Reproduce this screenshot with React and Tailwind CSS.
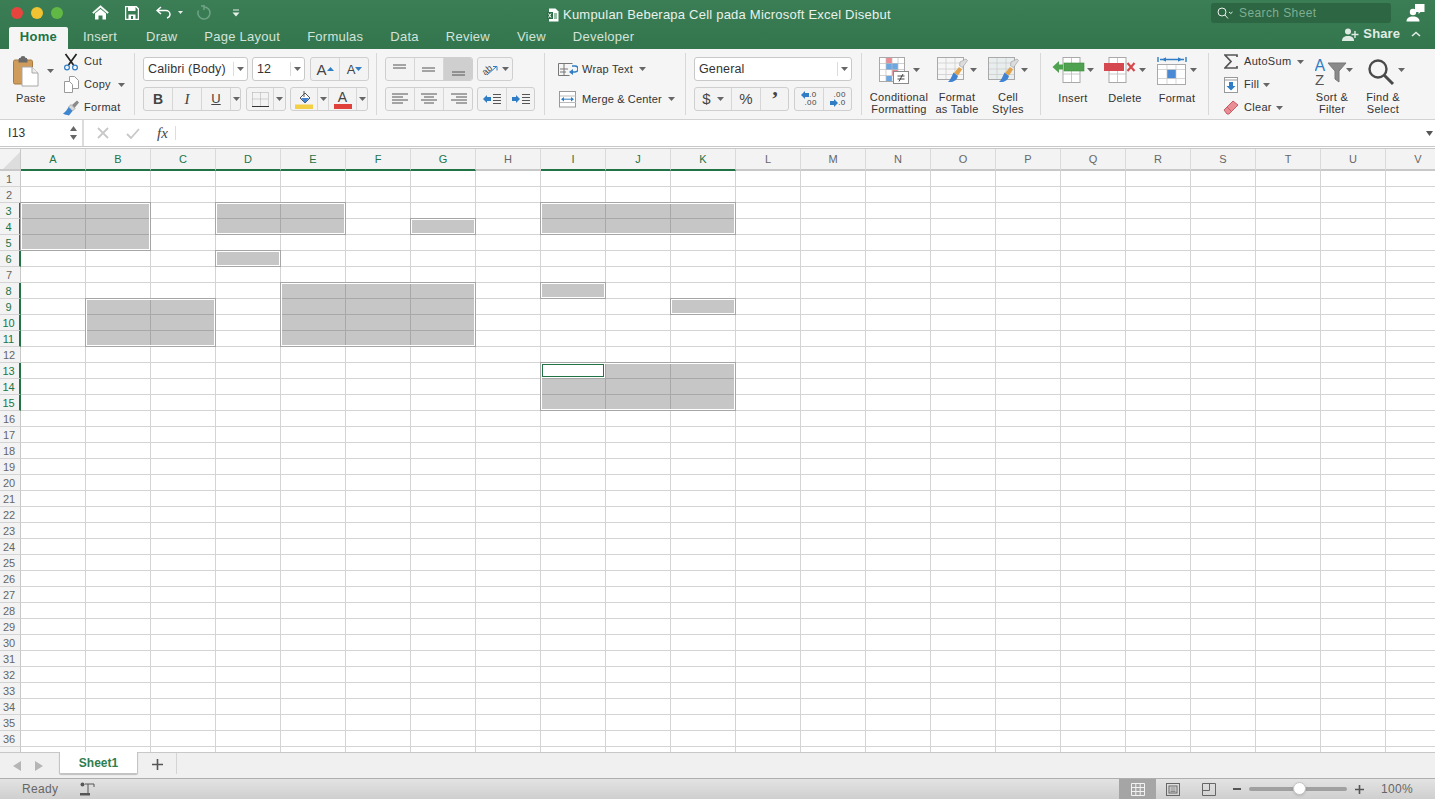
import React from "react";

const FONT = "font-['Liberation_Sans',Arial,sans-serif]";
const COLS = "ABCDEFGHIJKLMNOPQRSTUV".split("");
const SEL_COLS = "ABCDEFGIJK";
const SEL_ROWS = [3, 4, 5, 6, 8, 9, 10, 11, 13, 14, 15];
const SELECTIONS = [
  { c: 0, r: 3, w: 2, h: 3 },
  { c: 3, r: 3, w: 2, h: 2 },
  { c: 6, r: 4, w: 1, h: 1 },
  { c: 3, r: 6, w: 1, h: 1 },
  { c: 8, r: 3, w: 3, h: 2 },
  { c: 4, r: 8, w: 3, h: 4 },
  { c: 8, r: 8, w: 1, h: 1 },
  { c: 10, r: 9, w: 1, h: 1 },
  { c: 1, r: 9, w: 2, h: 3 },
  { c: 8, r: 13, w: 3, h: 3, active: true },
];

function Caret({ className = "" }) {
  return (
    <svg width="7" height="4" viewBox="0 0 7 4" className={"shrink-0 " + className}>
      <path d="M0 0h7L3.5 4z" fill="#666" />
    </svg>
  );
}

function Combo({ w, label, className = "" }) {
  return (
    <div className={"h-[24px] rounded-[3px] border border-[#c9c9c9] bg-white flex items-center text-[12.5px] tracking-[0.15px] text-[#333] " + w + " " + className}>
      <span className="pl-[4px] flex-1 whitespace-nowrap">{label}</span>
      <span className="w-[14px] h-[14px] border-l border-[#dcdcdc] flex items-center justify-center shrink-0">
        <Caret />
      </span>
    </div>
  );
}

function Seg({ children, className = "" }) {
  return (
    <div className={"h-[24px] rounded-[3px] border border-[#cfcfcf] bg-[#f3f3f3] flex overflow-hidden " + className}>
      {children}
    </div>
  );
}

function Cell({ w, children, active, last }) {
  return (
    <div className={"h-full flex items-center justify-center shrink-0 " + w + " " + (last ? "" : "border-r border-[#d6d6d6] ") + (active ? "bg-[#cfcfcf]" : "")}>
      {children}
    </div>
  );
}

function Lines({ rows }) {
  return (
    <svg width="18" height="14" viewBox="0 0 18 14">
      {rows.map(([x1, x2, y], i) => (
        <path key={i} d={`M${x1} ${y}H${x2}`} stroke="#555" strokeWidth="1" />
      ))}
    </svg>
  );
}

function TallButton({ w, icon, label, label2, className = "" }) {
  return (
    <div className={"shrink-0 flex flex-col items-center " + w + " " + className}>
      <div className="h-[38px] flex items-center justify-center relative w-full">{icon}</div>
      <div className="text-[11px] leading-[12px] tracking-[0.3px] text-[#333] text-center whitespace-nowrap mt-[1px]">
        {label}
        {label2 && <br />}
        {label2}
      </div>
    </div>
  );
}

function SmallRow({ icon, label, caretClass, iconW = "w-[22px]", h = "h-[23px]" }) {
  return (
    <div className={"flex items-center " + h}>
      <span className={"flex justify-center shrink-0 " + iconW}>{icon}</span>
      <span className="text-[11px] tracking-[0.3px] text-[#333] whitespace-nowrap ml-[2px]">{label}</span>
      {caretClass && <Caret className={caretClass} />}
    </div>
  );
}

const PasteIcon = (
  <svg width="26" height="31" viewBox="0 0 26 31">
    <rect x="0.5" y="4" width="19" height="24" rx="1.5" fill="#cf9c5c" stroke="#a87a3e" />
    <path d="M6 4h8V2h-1.5a2.5 2 0 0 0-5 0H6z" fill="#6a6a6a" />
    <rect x="5.5" y="3" width="9" height="3.5" rx="0.6" fill="#6a6a6a" />
    <path d="M9 11h10l6 6v13H9z" fill="#fff" stroke="#a8a8a8" />
    <path d="M19 11v6h6" fill="#eee" stroke="#a8a8a8" />
  </svg>
);
const CutIcon = (
  <svg width="16" height="18" viewBox="0 0 16 18">
    <path d="M2.5 1l8 11M13.5 1l-8 11" stroke="#222" strokeWidth="1.7" />
    <circle cx="4" cy="14.5" r="2.4" fill="none" stroke="#2f7dc4" strokeWidth="1.2" />
    <circle cx="12" cy="14.5" r="2.4" fill="none" stroke="#2f7dc4" strokeWidth="1.2" />
  </svg>
);
const CopyIcon = (
  <svg width="15" height="17" viewBox="0 0 15 17">
    <path d="M5.5 0.5h5l4 4v8h-9z" fill="#fff" stroke="#9a9a9a" />
    <path d="M0.5 5.5h5l3 3v8h-8z" fill="#fff" stroke="#9a9a9a" />
  </svg>
);
const BrushIcon = (
  <svg width="17" height="16" viewBox="0 0 17 16">
    <path d="M9 5l5-4.5 2 2L11.5 8z" fill="#8a8a8a" />
    <path d="M8 4.5l4 4-2.5 2.5-4-4z" fill="#d9d9d9" stroke="#888" strokeWidth="0.6" />
    <path d="M5.5 7l4 4-3.5 4.5C3.5 15 1.5 14.5 0 13.5 2.5 12 4 10 5.5 7z" fill="#3e86cf" />
  </svg>
);
const GridSvg = ({ children, w = 32, h = 30 }) => (
  <svg width={w} height={h} viewBox={`0 0 ${w} ${h}`}>{children}</svg>
);
const CondIcon = (
  <GridSvg>
    <rect x="0.5" y="0.5" width="25" height="24" fill="#fff" stroke="#a9a9a9" />
    <rect x="7" y="1" width="6" height="5" fill="#ec8b94" />
    <rect x="7" y="6" width="12" height="7" fill="#6da7e3" />
    <rect x="13" y="13" width="6" height="6" fill="#ec8b94" />
    <rect x="7" y="19" width="6" height="5" fill="#6da7e3" />
    <path d="M7 1v23M13 1v23M19 1v23M1 6.500h24M1 12.500h24M1 18.500h24" stroke="#bdbdbd" strokeWidth="0.7" />
    <rect x="14.500" y="14.500" width="15" height="12" fill="#fff" stroke="#8a8a8a" />
    <path d="M18.500 19h7M18.500 22h7M24 17l-4 7.500" stroke="#333" strokeWidth="0.9" fill="none" />
  </GridSvg>
);
const TableBrush = ({ tint }) => (
  <GridSvg>
    <rect x="0.5" y="0.5" width="26" height="22" fill={tint} stroke="#a9a9a9" />
    <path d="M9 1v21M18 1v21M1 6h25M1 12h25M1 17.500h25" stroke="#c8c8c8" strokeWidth="0.7" />
    <path d="M23 5l6-3 1.500 1.500-5 7-3-2z" fill="#dcdcdc" stroke="#999" strokeWidth="0.6" />
    <path d="M17 16l5-6 3 2.500-4 6z" fill="#e0a24a" />
    <path d="M16.500 15.500l4.500 3.500c-1 4-4 6.500-10 6 2.500-2 3.500-5.500 5.500-9.500z" fill="#3f82d2" />
  </GridSvg>
);
const InsertIcon = (
  <GridSvg w={34}>
    <rect x="11" y="0.500" width="17" height="25" fill="#fff" stroke="#a9a9a9" />
    <path d="M19.500 1v24M11 17h17" stroke="#bbb" strokeWidth="0.8" />
    <rect x="12" y="6" width="20" height="8" fill="#4fa24f" stroke="#3c8a3c" strokeWidth="0.6" />
    <path d="M0.500 10L7 4v3.500h4v5H7V16z" fill="#4fa24f" />
  </GridSvg>
);
const DeleteIcon = (
  <GridSvg w={34}>
    <rect x="5" y="0.500" width="17" height="25" fill="#fff" stroke="#a9a9a9" />
    <path d="M13.500 1v24M5 17h17" stroke="#bbb" strokeWidth="0.8" />
    <rect x="0" y="6" width="20" height="8" fill="#d6484f" />
    <path d="M23.500 6l7 8M30.500 6l-7 8" stroke="#d6484f" strokeWidth="2.200" />
  </GridSvg>
);
const FormatIcon = (
  <GridSvg>
    <path d="M1 0v5M29 0v5M3 2.500h24" stroke="#2f7dc4" strokeWidth="1.400" />
    <path d="M5 2.500l4-2.300v4.600zM25 2.500l-4-2.300v4.600z" fill="#2f7dc4" />
    <rect x="0.500" y="7.500" width="28" height="20" fill="#fff" stroke="#a9a9a9" />
    <rect x="10" y="12.500" width="9" height="9" fill="#4a8ad4" />
    <path d="M10 8v19M19 8v19M1 12.500h27M1 21.500h27" stroke="#c4c4c4" strokeWidth="0.7" />
  </GridSvg>
);

function Ribbon() {
  return (
    <div className="h-[71px] shrink-0 bg-[#f5f5f5] border-b border-[#d2d2d2] flex pt-[4px]">
      {/* Clipboard */}
      <div className="w-[135px] h-[62px] border-r border-[#d8d8d8] flex shrink-0">
        <div className="w-[60px] pl-[13px] shrink-0">
          <div className="flex items-center h-[36px]">
            {PasteIcon}
            <Caret className="ml-[8px]" />
          </div>
          <div className="text-[11px] tracking-[0.3px] text-[#333] mt-[3px] ml-[3px] leading-[12px]">Paste</div>
        </div>
        <div className="-mt-[3px]">
          <SmallRow icon={CutIcon} label="Cut" />
          <SmallRow icon={CopyIcon} label="Copy" caretClass="ml-[7px]" />
          <SmallRow icon={BrushIcon} label="Format" />
        </div>
      </div>
      {/* Font */}
      <div className="w-[242px] h-[62px] border-r border-[#d8d8d8] shrink-0 pl-[8px] pt-[4px]">
        <div className="flex gap-[4px]">
          <Combo w="w-[105px]" label="Calibri (Body)" />
          <Combo w="w-[53px]" label="12" />
          <Seg className="w-[59px] ml-[1px]">
            <Cell w="w-[29px]">
              <span className="text-[15px] text-[#444] font-medium leading-none">A</span>
              <svg width="7" height="4" viewBox="0 0 7 4"><path d="M0 4h7L3.500 0z" fill="#2f7dc4" /></svg>
            </Cell>
            <Cell w="w-[29px]" last>
              <span className="text-[13px] text-[#444] leading-none">A</span>
              <svg width="7" height="4" viewBox="0 0 7 4"><path d="M0 0h7L3.500 4z" fill="#2f7dc4" /></svg>
            </Cell>
          </Seg>
        </div>
        <div className="flex mt-[6px]">
          <Seg className="w-[98px]">
            <Cell w="w-[29px]"><span className="text-[14px] font-bold text-[#444]">B</span></Cell>
            <Cell w="w-[29px]"><span className="text-[15px] italic font-['Liberation_Serif',serif] text-[#444]">I</span></Cell>
            <Cell w="w-[29px]"><span className="text-[13px] underline text-[#444]">U</span></Cell>
            <Cell w="w-[10px]" last><Caret /></Cell>
          </Seg>
          <Seg className="w-[40px] ml-[5px]">
            <Cell w="w-[27px]">
              <svg width="17" height="15" viewBox="0 0 17 15">
                <path d="M0.500 0.500h16v13M0.500 0.500v13M8.500 0.500v13M0.500 7h16" stroke="#aaa" strokeDasharray="1 1" fill="none" />
                <path d="M0 14.500h17" stroke="#333" />
              </svg>
            </Cell>
            <Cell w="w-[11px]" last><Caret /></Cell>
          </Seg>
          <Seg className="w-[78px] ml-[4px]">
            <Cell w="w-[27px]">
              <svg width="18" height="19" viewBox="0 0 18 19">
                <path d="M5 8l5-5 5 5-5 5z" fill="#fff" stroke="#555" />
                <path d="M6 8h8l-4 5z" fill="#3f82d2" />
                <path d="M9 1v6" stroke="#555" />
                <rect x="0" y="14.500" width="18" height="4.500" fill="#f3cf46" />
              </svg>
            </Cell>
            <Cell w="w-[11px]"><Caret /></Cell>
            <Cell w="w-[28px]">
              <div className="flex flex-col items-center">
                <span className="text-[14px] leading-[14px] text-[#444] font-medium">A</span>
                <span className="block w-[18px] h-[5px] bg-[#e0413a]" />
              </div>
            </Cell>
            <Cell w="w-[10px]" last><Caret /></Cell>
          </Seg>
        </div>
      </div>
      {/* Alignment */}
      <div className="w-[168px] h-[62px] border-r border-[#d8d8d8] shrink-0 pl-[8px] pt-[4px]">
        <div className="flex">
          <Seg className="w-[88px]">
            <Cell w="w-[29px]"><Lines rows={[[2, 15, 3], [2, 15, 6]]} /></Cell>
            <Cell w="w-[29px]"><Lines rows={[[2, 15, 6], [2, 15, 9]]} /></Cell>
            <Cell w="w-[29px]" active last><Lines rows={[[2, 15, 10], [2, 15, 13]]} /></Cell>
          </Seg>
          <Seg className="w-[36px] ml-[4px]">
            <Cell w="w-[34px]" last>
              <svg width="18" height="14" viewBox="0 0 18 14">
                <text x="1" y="11" fontSize="9" fill="#444" transform="rotate(-40 6 8)" fontFamily="Liberation Sans">ab</text>
                <path d="M6 13L15 5M12 4.500h4v4" stroke="#2f7dc4" fill="none" />
              </svg>
              <Caret className="ml-[3px]" />
            </Cell>
          </Seg>
        </div>
        <div className="flex mt-[6px]">
          <Seg className="w-[88px]">
            <Cell w="w-[29px]"><Lines rows={[[1, 17, 2], [1, 12, 5], [1, 17, 8], [1, 12, 11]]} /></Cell>
            <Cell w="w-[29px]"><Lines rows={[[1, 17, 2], [4, 14, 5], [1, 17, 8], [4, 14, 11]]} /></Cell>
            <Cell w="w-[29px]" last><Lines rows={[[1, 17, 2], [6, 17, 5], [1, 17, 8], [6, 17, 11]]} /></Cell>
          </Seg>
          <Seg className="w-[58px] ml-[4px]">
            <Cell w="w-[29px]">
              <svg width="18" height="12" viewBox="0 0 18 12">
                <path d="M0 6l4-4v2h4v4H4v2z" fill="#2f7dc4" />
                <path d="M10 1.500h8M10 4.500h8M10 7.500h8M10 10.500h8" stroke="#555" />
              </svg>
            </Cell>
            <Cell w="w-[27px]" last>
              <svg width="18" height="12" viewBox="0 0 18 12">
                <path d="M8 6L4 2v2H0v4h4v2z" fill="#2f7dc4" />
                <path d="M10 1.500h8M10 4.500h8M10 7.500h8M10 10.500h8" stroke="#555" />
              </svg>
            </Cell>
          </Seg>
        </div>
      </div>
      {/* Wrap / Merge */}
      <div className="w-[141px] h-[62px] border-r border-[#d8d8d8] shrink-0 pl-[13px]">
        <div className="flex items-center h-[24px] mt-[4px]">
          <svg width="20" height="13" viewBox="0 0 20 13" className="shrink-0">
            <path d="M0.500 0.500h14M0.500 0.500v12h11M6 0.500v12M2 6h8M2 9h6" stroke="#777" fill="none" />
            <path d="M14 3h3a3 3 0 0 1 0 6h-3" stroke="#2f7dc4" strokeWidth="1.500" fill="none" />
            <path d="M11 9l4-3v6z" fill="#2f7dc4" />
          </svg>
          <span className="text-[11px] tracking-[0.2px] text-[#333] ml-[4px] whitespace-nowrap">Wrap Text</span>
          <Caret className="ml-[6px]" />
        </div>
        <div className="flex items-center h-[24px] mt-[6px]">
          <svg width="18" height="17" viewBox="0 0 18 17" className="shrink-0 ml-[1px]">
            <rect x="0.500" y="0.500" width="16" height="15.500" fill="#fff" stroke="#999" />
            <path d="M1 5h16M1 11.500h16" stroke="#bbb" />
            <path d="M3 8.200h11" stroke="#2f7dc4" />
            <path d="M2 8.200l3-2.200v4.400zM15 8.200l-3-2.200v4.400z" fill="#2f7dc4" />
          </svg>
          <span className="text-[11px] tracking-[0.15px] text-[#333] ml-[5px] whitespace-nowrap">Merge &amp; Center</span>
          <Caret className="ml-[6px]" />
        </div>
      </div>
      {/* Number */}
      <div className="w-[176px] h-[62px] border-r border-[#d8d8d8] shrink-0 pl-[8px] pt-[4px]">
        <Combo w="w-[158px]" label="General" />
        <div className="flex mt-[6px]">
          <Seg className="w-[95px]">
            <Cell w="w-[37px]">
              <span className="text-[15px] text-[#444]">$</span>
              <Caret className="ml-[6px]" />
            </Cell>
            <Cell w="w-[29px]"><span className="text-[15px] text-[#444]">%</span></Cell>
            <Cell w="w-[28px]" last><span className="text-[22px] leading-[14px] font-bold text-[#444] font-['Liberation_Serif',serif]">’</span></Cell>
          </Seg>
          <Seg className="w-[58px] ml-[5px]">
            <Cell w="w-[29px]">
              <div className="text-[8px] leading-[8px] text-[#444] text-right tracking-[0.4px]">
                <div className="flex items-center justify-end"><svg width="8" height="8" viewBox="0 0 8 8"><path d="M0 4l4-4v2h4v4H4v2z" fill="#2f7dc4" /></svg>.0</div>
                <div>.00</div>
              </div>
            </Cell>
            <Cell w="w-[28px]" last>
              <div className="text-[8px] leading-[8px] text-[#444] text-right tracking-[0.4px]">
                <div>.00</div>
                <div className="flex items-center justify-end"><svg width="8" height="8" viewBox="0 0 8 8"><path d="M8 4L4 0v2H0v4h4v2z" fill="#2f7dc4" /></svg>.0</div>
              </div>
            </Cell>
          </Seg>
        </div>
      </div>
      {/* Styles */}
      <div className="w-[179px] h-[62px] border-r border-[#d8d8d8] shrink-0 flex pl-[7px]">
        <TallButton w="w-[60px]" label="Conditional" label2="Formatting" icon={<div className="flex items-center">{CondIcon}<Caret className="ml-[2px] -mt-[4px]" /></div>} />
        <TallButton w="w-[56px]" label="Format" label2="as Table" icon={<div className="flex items-center"><TableBrush tint="#f6f6f6" /><Caret className="ml-[1px] -mt-[4px]" /></div>} />
        <TallButton w="w-[46px]" label="Cell" label2="Styles" icon={<div className="flex items-center"><TableBrush tint="#e8eeee" /><Caret className="ml-[1px] -mt-[4px]" /></div>} />
      </div>
      {/* Cells */}
      <div className="w-[168px] h-[62px] border-r border-[#d8d8d8] shrink-0 flex pl-[6px]">
        <TallButton w="w-[52px]" label="Insert" icon={<div className="flex items-center">{InsertIcon}<Caret className="ml-[1px] -mt-[4px]" /></div>} />
        <TallButton w="w-[52px]" label="Delete" icon={<div className="flex items-center">{DeleteIcon}<Caret className="ml-[1px] -mt-[4px]" /></div>} />
        <TallButton w="w-[52px]" label="Format" icon={<div className="flex items-center">{FormatIcon}<Caret className="ml-[1px] -mt-[4px]" /></div>} />
      </div>
      {/* Editing */}
      <div className="h-[62px] flex pl-[11px] shrink-0">
        <div className="w-[87px] -mt-[3px] shrink-0">
          <SmallRow
            icon={<svg width="14" height="15" viewBox="0 0 14 15"><path d="M13 3V1H1l6 6.500L1 14h12v-2" stroke="#555" strokeWidth="1.700" fill="none" /></svg>}
            label="AutoSum" caretClass="ml-[6px]"
          />
          <SmallRow
            icon={<svg width="14" height="16" viewBox="0 0 14 16"><rect x="0.500" y="0.500" width="13" height="15" fill="#fff" stroke="#999" /><path d="M0.500 3h13" stroke="#999" /><path d="M5 5h4v4h2.500L7 13.500 2.500 9H5z" fill="#2f7dc4" /></svg>}
            label="Fill" caretClass="ml-[4px]"
          />
          <SmallRow
            icon={<svg width="16" height="15" viewBox="0 0 16 15"><path d="M1 10l9-9 5 4-9 9H4z" fill="#ea8e95" stroke="#c65c65" /><path d="M4 7l4 4" stroke="#c65c65" /></svg>}
            label="Clear" caretClass="ml-[4px]"
          />
        </div>
        <TallButton w="w-[50px]" label="Sort &" label2="Filter" icon={
          <div className="flex items-center ml-[3px]">
            <svg width="32" height="28" viewBox="0 0 32 28">
              <text x="-0.500" y="13" fontSize="16" fill="#2f7dc4" fontFamily="Liberation Sans">A</text>
              <text x="0" y="27" fontSize="15" fill="#555" fontFamily="Liberation Sans">Z</text>
              <path d="M13 5h18l-7 8v11l-4-3v-8z" fill="#8a8a8a" stroke="#777" />
            </svg>
            <Caret className="-ml-[1px] -mt-[4px]" />
          </div>
        } />
        <TallButton w="w-[52px]" label="Find &" label2="Select" icon={
          <div className="flex items-center ml-[6px]">
            <svg width="28" height="28" viewBox="0 0 28 28">
              <circle cx="11" cy="11" r="8.500" fill="none" stroke="#4a4a4a" strokeWidth="2.400" />
              <path d="M17 17l9 9" stroke="#4a4a4a" strokeWidth="3" />
            </svg>
            <Caret className="ml-[3px] -mt-[4px]" />
          </div>
        } />
      </div>
    </div>
  );
}

function TitleBar() {
  const tabs = ["Insert", "Draw", "Page Layout", "Formulas", "Data", "Review", "View", "Developer"];
  return (
    <div className="h-[49px] shrink-0 bg-linear-to-b from-[#3b7e55] to-[#33764e] relative">
      <div className="h-[27px] flex items-center pb-[2px]">
        <div className="flex gap-[8px] pl-[11px]">
          <span className="w-[12px] h-[12px] rounded-full bg-[#e8443e]" />
          <span className="w-[12px] h-[12px] rounded-full bg-[#f1c232]" />
          <span className="w-[12px] h-[12px] rounded-full bg-[#62b844]" />
        </div>
        <svg width="17" height="15" viewBox="0 0 17 15" className="ml-[29px]">
          <path d="M8.500 0.500L0.500 7.500l1 1 7-6 7 6 1-1z" fill="#fff" stroke="#fff" strokeWidth="0.500" />
          <path d="M3 8.500v6h3.500v-4h4v4H14v-6L8.500 4z" fill="#fff" />
        </svg>
        <svg width="14" height="14" viewBox="0 0 14 14" className="ml-[16px]">
          <path d="M0.500 0.500h10.500l2.500 2.500v10.500h-13z" fill="none" stroke="#fff" strokeWidth="1.500" />
          <rect x="3" y="1" width="7.500" height="4" fill="#fff" />
          <rect x="3.500" y="8.500" width="7" height="5" fill="#fff" />
          <rect x="6" y="10" width="2" height="3" fill="#35784f" />
        </svg>
        <svg width="16" height="13" viewBox="0 0 16 13" className="ml-[17px]">
          <path d="M5 1L1 4.500 5 8M1.500 4.500H10a4 4 0 0 1 4 4 4 4 0 0 1-3 3.500" fill="none" stroke="#fff" strokeWidth="1.500" />
        </svg>
        <svg width="5" height="3" viewBox="0 0 5 3" className="ml-[6px]"><path d="M0 0h5L2.500 3z" fill="#e5efe9" /></svg>
        <svg width="14" height="15" viewBox="0 0 14 15" className="ml-[14px]">
          <path d="M7 2a6 6 0 1 1-5.500 3.500M7 0v5M7 1h-3" fill="none" stroke="#6fa386" strokeWidth="1.500" />
        </svg>
        <svg width="8" height="8" viewBox="0 0 8 8" className="ml-[21px]">
          <path d="M1 1h6" stroke="#e5efe9" /><path d="M0.500 3.500h7L4 7.500z" fill="#e5efe9" />
        </svg>
        <div className="absolute left-[547px] top-[5px] flex items-center">
          <svg width="12" height="14" viewBox="0 0 12 14" className="shrink-0">
            <path d="M2 0.500h6.500l3 3V13.500H2z" fill="#fff" />
            <path d="M0 4h6v7H0z" fill="#2c6e47" />
            <path d="M1.500 5.500l2.500 4M4 5.500l-2.500 4" stroke="#fff" />
            <path d="M7 6h3M7 8h3M7 10h3" stroke="#35784f" />
          </svg>
          <span className="ml-[4px] text-[13px] tracking-[0.22px] text-[#e9f1ec] whitespace-nowrap">
            Kumpulan Beberapa Cell pada Microsoft Excel Disebut
          </span>
        </div>
        <div className="absolute left-[1211px] top-[3px] w-[180px] h-[20px] rounded-[3px] bg-[#2d6642] flex items-center pl-[6px]">
          <svg width="16" height="12" viewBox="0 0 16 12" className="shrink-0">
            <circle cx="5" cy="5" r="4" fill="none" stroke="#e9f1ec" />
            <path d="M8 8l3 3.500" stroke="#e9f1ec" />
            <path d="M12 5l1.800 1.500L15.500 5" fill="none" stroke="#e9f1ec" />
          </svg>
          <span className="ml-[6px] text-[12px] font-medium tracking-[0.4px] text-[#7fae92] whitespace-nowrap">Search Sheet</span>
        </div>
        <svg width="19" height="19" viewBox="0 0 19 19" className="absolute left-[1406px] top-[3px]">
          <path d="M9 1h9.500v8h-4l-2 2v-2H9z" fill="#fff" />
          <circle cx="7" cy="9" r="3.200" fill="#fff" />
          <path d="M0.500 18.500c0-3.500 2.500-5 6.500-5s6.500 1.500 6.500 5z" fill="#fff" />
        </svg>
      </div>
      <div className="h-[22px] flex items-stretch pl-[9px] relative">
        <div className="w-[59px] h-[22px] pb-[2px] rounded-t-[2px] bg-[#f5f5f5] flex items-center justify-center text-[13px] font-bold text-[#217346] tracking-[0.3px] shrink-0">
          Home
        </div>
        <div className="flex items-center gap-[27px] ml-[15px] pb-[2px]">
          {tabs.map((t) => (
            <span key={t} className={"text-[13px] font-medium tracking-[0.25px] text-[#d3e3da] whitespace-nowrap " + (t === "Draw" ? "ml-[2px]" : "")}>{t}</span>
          ))}
        </div>
        <div className="absolute right-[14px] top-0 h-[14px] flex items-center">
          <svg width="17" height="13" viewBox="0 0 17 13">
            <circle cx="6" cy="3.500" r="3" fill="#dfeae4" />
            <path d="M0 13c0-3.500 2-5 6-5s6 1.500 6 5z" fill="#dfeae4" />
            <path d="M13 3v7M9.500 6.500h7" stroke="#dfeae4" strokeWidth="1.400" />
          </svg>
          <span className="ml-[4px] text-[13px] font-bold tracking-[0.1px] text-[#e1ece6]">Share</span>
          <svg width="10" height="6" viewBox="0 0 10 6" className="ml-[11px]">
            <path d="M1 5l4-3.500L9 5" fill="none" stroke="#e1ece6" strokeWidth="1.600" />
          </svg>
        </div>
      </div>
    </div>
  );
}

function FormulaBar() {
  return (
    <div className="h-[29px] shrink-0 bg-white border-b-[3px] border-double border-[#c8c8c8] flex items-center text-[#333]">
      <div className="w-[84px] h-full border-r-2 border-[#dcdcdc] flex items-center justify-between pl-[8px] pr-[5px] shrink-0">
        <span className="text-[12px] tracking-[0.3px]">I13</span>
        <div className="flex flex-col gap-[4px]">
          <svg width="7" height="5" viewBox="0 0 7 5"><path d="M0 5h7L3.500 0z" fill="#666" /></svg>
          <svg width="7" height="5" viewBox="0 0 7 5"><path d="M0 0h7L3.500 5z" fill="#666" /></svg>
        </div>
      </div>
      <svg width="12" height="12" viewBox="0 0 12 12" className="ml-[13px]">
        <path d="M1 1l10 10M11 1L1 11" stroke="#c8c8c8" strokeWidth="1.800" />
      </svg>
      <svg width="14" height="11" viewBox="0 0 14 11" className="ml-[17px]">
        <path d="M1 6l4 4 8-9" stroke="#c8c8c8" strokeWidth="1.800" fill="none" />
      </svg>
      <span className="ml-[17px] text-[15px] italic font-['Liberation_Serif',serif] text-[#444] w-[20px]">fx</span>
      <span className="w-px h-[14px] bg-[#dddddd] ml-[-2px]" />
      <span className="flex-1" />
      <svg width="7" height="5" viewBox="0 0 7 5" className="mr-[2px]"><path d="M0 0h7L3.500 5z" fill="#555" /></svg>
    </div>
  );
}

function Selection({ s }) {
  return (
    <div
      className="absolute border border-[#a6a6a6] bg-white"
      style={{ left: 20 + 65 * s.c, top: 16 * (s.r - 1) - 1, width: 65 * s.w + 1, height: 16 * s.h + 1 }}
    >
      <div className="absolute inset-[1px] bg-[#c6c6c6]" />
      {Array.from({ length: s.w - 1 }, (_, i) => (
        <div key={i} className="absolute top-[1px] bottom-[1px] w-px bg-[#a8a8a8]" style={{ left: 64 + 65 * i }} />
      ))}
      {Array.from({ length: s.h - 1 }, (_, i) => (
        <div key={i} className="absolute left-[1px] right-[1px] h-px bg-[#a8a8a8]" style={{ top: 15 + 16 * i }} />
      ))}
      {s.active && (
        <div className="absolute left-0 top-0 w-[64px] h-[15px] bg-white">
          <div className="absolute left-[1px] top-[1px] w-[62px] h-[13px] border border-[#217346] bg-white" />
        </div>
      )}
    </div>
  );
}

function Grid() {
  const rows = Array.from({ length: 37 }, (_, i) => i + 1);
  return (
    <div className="flex-1 min-h-0 overflow-hidden flex flex-col">
      <div className="h-[22px] shrink-0 flex bg-[#f3f3f3]">
        <div className="w-[21px] h-full border-r border-[#c8c8c8] border-b-2 border-b-[#c8c8c8] shrink-0 flex items-end justify-end">
          <svg width="17" height="17" viewBox="0 0 17 17"><path d="M17 0v17H0z" fill="#dddddd" /></svg>
        </div>
        {COLS.map((c) => {
          const sel = SEL_COLS.includes(c);
          return (
            <div
              key={c}
              className={
                "w-[65px] h-full shrink-0 border-r border-[#dadada] border-b-2 flex items-center justify-center pt-[1px] text-[11px] " +
                (sel ? "border-b-[#217346] text-[#217346]" : "border-b-[#c8c8c8] text-[#666]")
              }
            >
              {c}
            </div>
          );
        })}
      </div>
      <div className="relative flex-1 min-h-0">
        {rows.map((r) => {
          const sel = SEL_ROWS.includes(r);
          return (
            <div key={r} className="flex h-[16px]">
              <div
                className={
                  "w-[21px] shrink-0 bg-[#f3f3f3] border-b border-[#d4d4d4] border-r flex items-center justify-center pr-[2px] pt-[1px] text-[11px] leading-none " +
                  (sel ? "border-r-2 border-r-[#217346] text-[#217346]" : "border-r-[#c8c8c8] text-[#666]")
                }
              >
                {r < 37 ? r : ""}
              </div>
              {COLS.map((c) => (
                <div key={c} className="w-[65px] shrink-0 bg-white border-r border-b border-[#d4d4d4]" />
              ))}
            </div>
          );
        })}
        {SELECTIONS.map((s, i) => (
          <Selection key={i} s={s} />
        ))}
      </div>
    </div>
  );
}

function SheetTabs() {
  return (
    <div className="h-[26px] shrink-0 bg-[#f0f0f0] border-t border-[#c8c8c8] flex items-start">
      <svg width="8" height="10" viewBox="0 0 8 10" className="ml-[13px] mt-[8px]"><path d="M8 0v10L0 5z" fill="#b5b5b5" /></svg>
      <svg width="8" height="10" viewBox="0 0 8 10" className="ml-[14px] mt-[8px]"><path d="M0 0v10l8-5z" fill="#b5b5b5" /></svg>
      <div className="ml-[16px] w-[79px] h-[22px] -mt-[1px] bg-white border-x border-b border-[#c4c4c4] rounded-b-[2px] shadow-[0_1px_1px_rgba(0,0,0,0.2)] flex items-center justify-center text-[12px] font-bold text-[#2f7d50]">
        Sheet1
      </div>
      <svg width="11" height="11" viewBox="0 0 11 11" className="ml-[14px] mt-[6px]">
        <path d="M5.500 0v11M0 5.500h11" stroke="#555" strokeWidth="1.600" />
      </svg>
      <span className="w-px h-[21px] bg-[#d4d4d4] ml-[13px]" />
    </div>
  );
}

function StatusBar() {
  return (
    <div className="h-[21px] shrink-0 bg-linear-to-b from-[#e3e3e3] to-[#cfcfcf] border-t border-[#aeaeae] flex items-center text-[#666]">
      <span className="ml-[22px] text-[12px] tracking-[0.3px]">Ready</span>
      <svg width="15" height="14" viewBox="0 0 15 14" className="ml-[22px]">
        <circle cx="2.500" cy="2.500" r="2" fill="#555" />
        <path d="M5 2h9v3M8 2v10" stroke="#555" fill="none" />
        <rect x="0" y="11" width="10" height="2.500" fill="#555" />
      </svg>
      <div className="flex-1" />
      <div className="w-[37px] h-[20px] bg-[#a5a5a5] flex items-center justify-center">
        <svg width="14" height="13" viewBox="0 0 14 13">
          <path d="M0.500 0.500h13v12h-13zM0.500 4.500h13M0.500 8.500h13M4.800 0.500v12M9.200 0.500v12" fill="none" stroke="#f2f2f2" />
        </svg>
      </div>
      <svg width="14" height="13" viewBox="0 0 14 13" className="ml-[10px]">
        <rect x="0.500" y="0.500" width="13" height="12" fill="none" stroke="#666" />
        <rect x="3" y="3" width="8" height="7" fill="none" stroke="#666" />
        <path d="M4.500 5h5M4.500 7h5M4.500 8.500h5" stroke="#666" strokeWidth="0.700" />
      </svg>
      <svg width="14" height="13" viewBox="0 0 14 13" className="ml-[22px]">
        <path d="M0.500 0.500h13v12h-13zM0.500 7.500h7V0.500" fill="none" stroke="#666" />
      </svg>
      <span className="ml-[17px] w-[8px] h-[2px] bg-[#555]" />
      <div className="ml-[8px] w-[98px] h-[4px] rounded-full bg-[#a0a0a0] relative">
        <span className="absolute left-[44px] -top-[5px] w-[13px] h-[13px] rounded-full bg-white border border-[#c4c4c4] shadow-sm" />
      </div>
      <svg width="9" height="9" viewBox="0 0 9 9" className="ml-[8px]"><path d="M4.500 0v9M0 4.500h9" stroke="#555" strokeWidth="1.600" /></svg>
      <span className="ml-[17px] mr-[22px] text-[12px] tracking-[0.3px]">100%</span>
    </div>
  );
}

export default function App() {
  return (
    <div className={"w-[1435px] h-[799px] overflow-hidden flex flex-col bg-white " + FONT}>
      <TitleBar />
      <Ribbon />
      <FormulaBar />
      <Grid />
      <SheetTabs />
      <StatusBar />
    </div>
  );
}
